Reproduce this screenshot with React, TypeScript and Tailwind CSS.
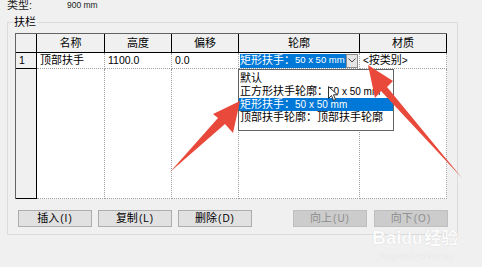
const headCell =
  "flex items-center justify-center border-r border-b border-black bg-[#f0f0f0] text-[11px]";
const dataCell =
  "flex items-center border-r border-b border-dotted border-[#a0a0a0] bg-white px-[3px]";
const rowHead = "border-r border-b border-black bg-[#f0f0f0]";

function Btn({ label, keyChar, disabled }: { label: string; keyChar: string; disabled?: boolean }) {
  return (
    <div
      className={
        disabled
          ? "flex h-[17px] w-[74px] items-center justify-center border border-[#bfbfbf] bg-[#cccccc] text-[11px] text-[#8c8c8c]"
          : "flex h-[17px] w-[74px] items-center justify-center border border-[#adadad] bg-[#e1e1e1] text-[11px] text-black"
      }
    >
      {label}
      <span className="ml-[1px] text-[10px] tracking-[1px]">({keyChar})</span>
    </div>
  );
}

export default function App() {
  return (
    <div className="relative h-[267px] w-[482px] overflow-hidden bg-[#f0f0f0] font-['Liberation_Sans','Noto_Sans_CJK_SC',sans-serif] text-[11px] text-black">
      <div className="flex h-[10px] items-center pl-[7px] leading-none text-[#222]">
        <span className="w-[60px]">类型:</span>
        <span className="text-[8.5px]">900 mm</span>
      </div>

      <div className="relative ml-[7px] mt-[12px] h-[213px] w-[451px] border border-[#dcdcdc] pl-[7px] pt-[10px]">
        <span className="absolute left-[5px] top-[-8px] bg-[#f0f0f0] px-[1px] text-[11px] leading-[14px]">
          扶栏
        </span>

        <div className="grid h-[166px] w-[432px] grid-cols-[21px_68px_67px_67px_121px_87px] grid-rows-[19px_16px_1fr] border-l border-t border-[#646464]">
          <div className={headCell} />
          <div className={headCell}>名称</div>
          <div className={headCell}>高度</div>
          <div className={headCell}>偏移</div>
          <div className={headCell}>轮廓</div>
          <div className={headCell}>材质</div>

          <div className={rowHead + " flex items-center pl-[3px] text-[10.5px]"}>1</div>
          <div className={dataCell}>顶部扶手</div>
          <div className={dataCell + " text-[10.5px]"}>1100.0</div>
          <div className={dataCell + " text-[10.5px]"}>0.0</div>
          <div className="relative flex items-center border-r border-b border-dotted border-[#a0a0a0] bg-white pl-[1px]">
            <div className="flex h-[14px] w-[106px] items-center overflow-hidden whitespace-nowrap bg-[#0078d7] text-white">
              矩形扶手：<span className="text-[9.5px]">50 x 50 mm</span>
            </div>
            <div className="flex h-[14px] w-[12px] items-center justify-center border border-[#8a8a8a] bg-[#e5e5e5]">
              <svg width="8" height="5" viewBox="0 0 8 5">
                <polyline points="0.5,0.5 4,4 7.5,0.5" fill="none" stroke="#444" strokeWidth="1" />
              </svg>
            </div>

            <div className="absolute left-[-1px] top-[16px] z-10 w-[156px] border border-[#646464] bg-white pb-[6px] pt-[2px]">
              <div className="h-[13px] whitespace-nowrap pl-[1px] leading-[13px]">默认</div>
              <div className="h-[13px] whitespace-nowrap pl-[1px] leading-[13px]">
                正方形扶手轮廓：<span className="text-[10px]">50 x 50 mm</span>
              </div>
              <div className="h-[13px] whitespace-nowrap bg-[#0078d7] pl-[1px] leading-[13px] text-white">
                矩形扶手：<span className="text-[10px]">50 x 50 mm</span>
              </div>
              <div className="h-[13px] whitespace-nowrap pl-[1px] leading-[13px]">顶部扶手轮廓：顶部扶手轮廓</div>

              <svg className="absolute left-[89px] top-[16px]" width="10" height="16" viewBox="0 0 10 16">
                <path
                  d="M0.5 0.5 L0.5 12.5 L3.5 9.5 L5.5 14.5 L7.5 13.5 L5.5 8.8 L9.5 8.8 Z"
                  fill="white"
                  stroke="#333"
                  strokeWidth="1"
                  strokeLinejoin="round"
                />
              </svg>
            </div>
          </div>
          <div className={dataCell}>
            <span className="text-[10px]">&lt;</span>按类别<span className="text-[10px]">&gt;</span>
          </div>

          <div className={rowHead} />
          <div className={dataCell} />
          <div className={dataCell} />
          <div className={dataCell} />
          <div className={dataCell} />
          <div className={dataCell} />
        </div>

        <div className="ml-[3px] mt-[11px] flex w-[430px] justify-between">
          <div className="flex gap-[6px]">
            <Btn label="插入" keyChar="I" />
            <Btn label="复制" keyChar="L" />
            <Btn label="删除" keyChar="D" />
          </div>
          <div className="flex gap-[7px]">
            <Btn label="向上" keyChar="U" disabled />
            <Btn label="向下" keyChar="O" disabled />
          </div>
        </div>
      </div>

      <svg className="pointer-events-none absolute left-0 top-0 z-20" width="482" height="267" viewBox="0 0 482 267">
        <polygon points="170,172 218,118 213,114 240,101 233,133 225,124" fill="#e8493b" />
        <polygon points="368,65 393,81 387,87 462,178 381,91 375,98" fill="#e8493b" />
      </svg>

      <div className="pointer-events-none absolute left-[372px] top-[226px] z-30 flex flex-col items-center text-white opacity-80 [text-shadow:0_0_1px_rgba(0,0,0,0.2)]">
        <div className="flex items-baseline font-['Liberation_Sans',sans-serif] text-[19px] font-bold leading-[22px]">
          Bai<span className="text-[17px]">du</span>
          <span className="ml-[2px] font-['Noto_Sans_CJK_SC',sans-serif] text-[17px] font-bold">经验</span>
        </div>
        <div className="font-['Liberation_Serif',serif] text-[10px] leading-[11px]">jingyan.baidu.com</div>
      </div>
    </div>
  );
}
